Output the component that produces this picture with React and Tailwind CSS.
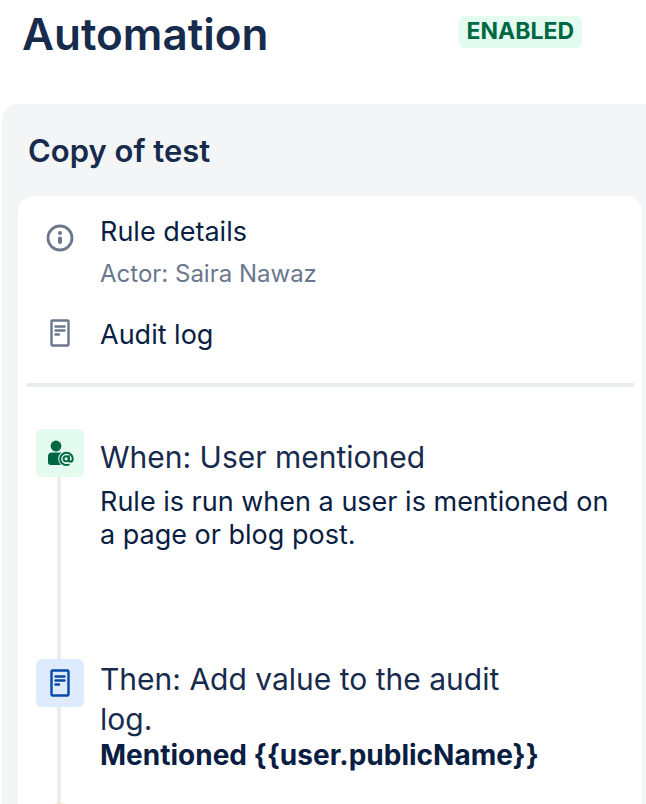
// Automation rule sidebar: rule details, audit log and the chain of steps
import React from "react";

function InfoIcon() {
  return (
    <svg width="28" height="28" viewBox="0 0 28 28" fill="none" aria-hidden="true">
      <circle cx="14" cy="14" r="12" stroke="currentColor" strokeWidth="2.8" />
      <circle cx="14" cy="9" r="2" fill="currentColor" />
      <rect x="12" y="12.5" width="4" height="7.5" rx="2" fill="currentColor" />
    </svg>
  );
}

function LogIcon() {
  return (
    <svg width="28" height="28" viewBox="0 0 28 28" fill="none" aria-hidden="true">
      <rect x="5.5" y="1.5" width="17" height="25" rx="1" stroke="currentColor" strokeWidth="2.4" />
      <path d="M9.5 7.5h9M9.5 11.5h9M9.5 15.5h3.5" stroke="currentColor" strokeWidth="2.4" strokeLinecap="round" />
    </svg>
  );
}

function MentionIcon() {
  return (
    <svg width="48" height="48" viewBox="0 0 48 48" fill="none" aria-hidden="true">
      <circle cx="20" cy="17" r="5.4" fill="currentColor" />
      <path d="M12 27.5c0-2.6 1.4-4 3.8-4h8.4c2.4 0 3.8 1.4 3.8 4V36H16c-2.4 0-4-.8-4-2.3z" fill="currentColor" />
      <circle cx="30.5" cy="29.8" r="8.3" fill="#e3fcef" />
      <circle cx="30.2" cy="29.8" r="2.6" stroke="currentColor" strokeWidth="1.9" />
      <path
        d="M32.9 27v3.8c0 1.3.7 2 1.7 2 1.3 0 2.1-1.2 2.1-3 0-3.5-2.7-6.1-6.2-6.1s-6.3 2.7-6.3 6.2 2.7 6.2 6.3 6.2c.8 0 1.5-.1 2.2-.4"
        stroke="currentColor"
        strokeWidth="2"
        strokeLinecap="round"
      />
    </svg>
  );
}

function MenuRow({ icon, title, subtitle }) {
  return (
    <button className="flex w-full items-start text-left">
      <span className={`ml-7 w-[54px] shrink-0 text-[#6b778c] ${subtitle ? "mt-3" : "mt-1"}`}>{icon}</span>
      <span>
        <span className="block text-[27px] leading-10 text-[#091e42]">{title}</span>
        {subtitle && <span className="mt-1 block text-2xl leading-9 text-[#6b778c]">{subtitle}</span>}
      </span>
    </button>
  );
}

function Step({ icon, iconClass, children }) {
  return (
    <li className="flex items-stretch">
      <div className="mr-4 ml-[18px] flex w-12 shrink-0 flex-col">
        <div className={`flex h-12 items-center justify-center rounded-md ${iconClass}`}>{icon}</div>
        <div className="ml-[21px] w-1 flex-1 bg-[#ebecf0]" />
      </div>
      <div className="min-w-0 flex-1 pr-4">{children}</div>
    </li>
  );
}

export default function App() {
  return (
    <div className="min-h-screen bg-white font-['Inter',sans-serif] text-[#172b4d]">
      <header className="flex h-[104px] items-start justify-between pt-2 pr-16 pl-[22px]">
        <h1 className="text-[44px] leading-[52px] font-semibold">Automation</h1>
        <span className="mt-2 h-8 rounded-md bg-[#e3fcef] px-2 text-[23px] leading-[31px] font-bold text-[#006644]">
          ENABLED
        </span>
      </header>

      <main className="ml-0.5 rounded-tl-2xl bg-[#f4f5f7] pr-1 pb-4 pl-4">
        <h2 className="pt-[27px] pb-[25px] pl-2.5 text-[31px] leading-10 font-semibold">Copy of test</h2>

        <div className="rounded-2xl bg-white">
          {/* Rule menu */}
          <div className="flex flex-col gap-[23px] pt-4 pb-7">
            <MenuRow icon={<InfoIcon />} title="Rule details" subtitle="Actor: Saira Nawaz" />
            <MenuRow icon={<LogIcon />} title="Audit log" />
          </div>
          <hr className="mx-2 border-t-4 border-[#ebecf0]" />

          {/* Steps */}
          <ol className="pt-[42px] pb-6">
            <Step icon={<MentionIcon />} iconClass="bg-[#e3fcef] text-[#006644]">
              <div className="pt-2 pb-[108px]">
                <h3 className="text-[30px] leading-10">When: User mentioned</h3>
                <p className="mt-2 text-[27px] leading-[33px] text-[#091e42]">
                  Rule is run when a user is mentioned on a page or blog post.
                </p>
              </div>
            </Step>
            <Step icon={<LogIcon />} iconClass="bg-[#deebff] text-[#0747a6]">
              <div className="pb-[31px]">
                <h3 className="pr-24 text-[30px] leading-10">Then: Add value to the audit log.</h3>
                <p className="text-[28px] leading-[33px] font-bold text-[#091e42]">{"Mentioned {{user.publicName}}"}</p>
              </div>
            </Step>
            <li className="ml-[18px] h-12 w-12 rounded-full bg-[#ffe2bd]" />
          </ol>
        </div>
      </main>
    </div>
  );
}
